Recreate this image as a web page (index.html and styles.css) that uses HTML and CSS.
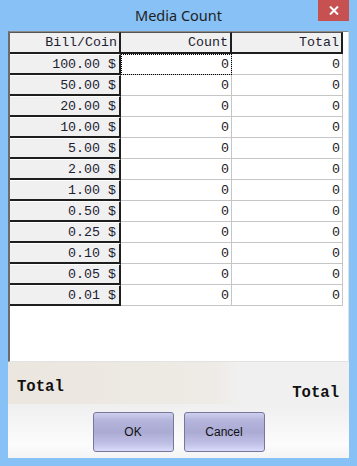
FILE: index.html
```html
<!DOCTYPE html>
<html lang="en">
  <head>
    <meta charset="UTF-8" />
    <title>Media Count</title>
    <link rel="stylesheet" href="styles.css">
  </head>
  <body>
    <div class="window">
      <div class="titlebar">
        <span class="title">Media Count</span>
        <button class="close" aria-label="Close">
          <svg width="10" height="9" viewBox="0 0 10 9">
            <path d="M1 0.5 L9 8.5 M9 0.5 L1 8.5" stroke="#fff" stroke-width="2" fill="none" />
          </svg>
        </button>
      </div>

      <div class="client">
        <div class="grid-area">
          <div class="grid">
            <div class="cell head">Bill/Coin</div>
            <div class="cell head">Count</div>
            <div class="cell head">Total</div>

            <div class="cell rowhead">100.00 $</div>
            <div class="cell data focus">0</div>
            <div class="cell data">0</div>

            <div class="cell rowhead">50.00 $</div>
            <div class="cell data">0</div>
            <div class="cell data">0</div>

            <div class="cell rowhead">20.00 $</div>
            <div class="cell data">0</div>
            <div class="cell data">0</div>

            <div class="cell rowhead">10.00 $</div>
            <div class="cell data">0</div>
            <div class="cell data">0</div>

            <div class="cell rowhead">5.00 $</div>
            <div class="cell data">0</div>
            <div class="cell data">0</div>

            <div class="cell rowhead">2.00 $</div>
            <div class="cell data">0</div>
            <div class="cell data">0</div>

            <div class="cell rowhead">1.00 $</div>
            <div class="cell data">0</div>
            <div class="cell data">0</div>

            <div class="cell rowhead">0.50 $</div>
            <div class="cell data">0</div>
            <div class="cell data">0</div>

            <div class="cell rowhead">0.25 $</div>
            <div class="cell data">0</div>
            <div class="cell data">0</div>

            <div class="cell rowhead">0.10 $</div>
            <div class="cell data">0</div>
            <div class="cell data">0</div>

            <div class="cell rowhead">0.05 $</div>
            <div class="cell data">0</div>
            <div class="cell data">0</div>

            <div class="cell rowhead">0.01 $</div>
            <div class="cell data">0</div>
            <div class="cell data">0</div>
          </div>
        </div>

        <div class="totals">
          <span class="total-label">Total</span>
          <span class="total-value">Total</span>
        </div>

        <div class="buttons">
          <button class="btn">OK</button>
          <button class="btn">Cancel</button>
        </div>
      </div>
    </div>
  </body>
</html>
```

FILE: styles.css
```css
html,
body {
  margin: 0;
  padding: 0;
}
body {
  background: #87c1f5;
  width: 357px;
  height: 466px;
  overflow: hidden;
}
.window {
  display: flex;
  flex-direction: column;
  height: 466px;
}
.titlebar {
  position: relative;
  height: 31px;
  display: flex;
  align-items: center;
  justify-content: center;
}
.title {
  font-family: "Noto Sans", "DejaVu Sans", sans-serif;
  font-size: 14.5px;
  color: #1f1f1f;
  margin-top: -1px;
}
.close {
  position: absolute;
  top: 0;
  right: 8px;
  width: 31px;
  height: 21px;
  border: none;
  padding: 0;
  background: #c75050;
  display: flex;
  align-items: center;
  justify-content: center;
}
.client {
  flex: 1;
  margin: 0 8px 8px 8px;
  display: flex;
  flex-direction: column;
  background: #f0f0f0;
}
.grid-area {
  height: 331px;
  box-sizing: border-box;
  background: #fff;
  border-left: 2px solid #6b6b6b;
  border-top: 1px solid #8a8a8a;
  border-right: 1px solid #e2e2e2;
  border-bottom: 1px solid #e2e2e2;
}
.grid {
  display: grid;
  grid-template-columns: 111px 111px 111px;
  grid-template-rows: 22px;
  grid-auto-rows: 21px;
  font-family: "Liberation Mono", "Courier New", monospace;
  font-size: 13.3px;
  color: #1d1d33;
}
.cell {
  box-sizing: border-box;
  display: flex;
  align-items: center;
  justify-content: flex-end;
  padding-right: 2px;
}
.head {
  background: #f0f0f0;
  border-top: 1px solid #555;
  border-bottom: 2px solid #1e1e1e;
  border-right: 2px solid #1e1e1e;
}
.rowhead {
  background: #f0f0f0;
  border-top: 1px solid #fff;
  border-bottom: 2px solid #1e1e1e;
  border-right: 2px solid #1e1e1e;
  padding-right: 3px;
}
.data {
  background: #fff;
  color: #222;
  border-right: 1px solid #c6c6c6;
  border-bottom: 1px solid #c6c6c6;
}
.focus {
  outline: 1px dotted #000;
  outline-offset: -1px;
}
.totals {
  height: 42px;
  display: flex;
  justify-content: space-between;
  padding: 0 10px 0 9px;
  background: linear-gradient(to right, #ebe6de 0%, #eeebe6 60%, #f0f0f0 68%);
  font-family: "Liberation Mono", "Courier New", monospace;
  font-weight: bold;
  font-size: 15.6px;
  color: #111;
}
.total-label {
  margin-top: 16px;
}
.total-value {
  margin-top: 22px;
}
.buttons {
  flex: 1;
  display: flex;
  align-items: center;
  justify-content: center;
  gap: 10px;
  padding-top: 1px;
  background: linear-gradient(to bottom, #efefef 0%, #f6f6f6 40%, #fcfcfc 75%, #f3f3f3 100%);
}
.btn {
  width: 81px;
  height: 40px;
  border: 1px solid #77779c;
  border-radius: 3px;
  background: linear-gradient(to bottom, #cfcfee 0%, #b4b4dc 20%, #aaaad4 50%, #c0c0e6 80%, #dadafa 100%);
  font-family: "Liberation Sans", Arial, sans-serif;
  font-size: 12px;
  color: #111;
  padding: 0;
  cursor: pointer;
}
```
